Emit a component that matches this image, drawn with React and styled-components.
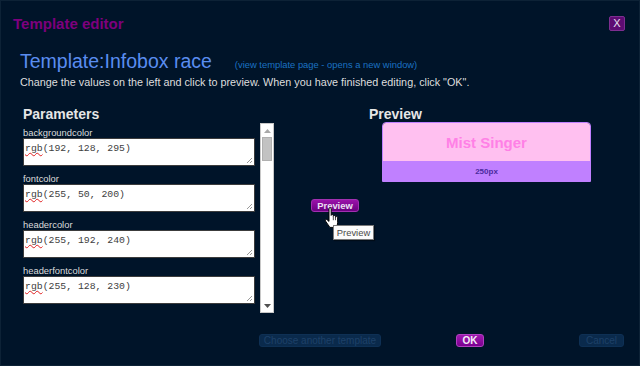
import React from 'react';
import styled, { createGlobalStyle } from 'styled-components';

const GlobalStyle = createGlobalStyle`
  html, body {
    margin: 0;
    padding: 0;
    background: #001429;
  }
  * {
    box-sizing: border-box;
  }
`;

const PARAMS = [
  { name: 'backgroundcolor', value: '(192, 128, 295)' },
  { name: 'fontcolor', value: '(255, 50, 200)' },
  { name: 'headercolor', value: '(255, 192, 240)' },
  { name: 'headerfontcolor', value: '(255, 128, 230)' },
];

const App = () => (
  <>
    <GlobalStyle />
    <Dialog>
      <TitleBar>
        <DialogTitle>Template editor</DialogTitle>
        <CloseButton>X</CloseButton>
      </TitleBar>

      <Content>
        <HeadingRow>
          <TemplateName>Template:Infobox race</TemplateName>
          <TemplateLink>(view template page - opens a new window)</TemplateLink>
        </HeadingRow>
        <Instruction>
          Change the values on the left and click to preview. When you have finished editing, click "OK".
        </Instruction>

        <Columns>
          <LeftColumn>
            <SectionTitle>Parameters</SectionTitle>
            <ScrollPanel>
              <ParamList>
                {PARAMS.map(p => (
                  <ParamItem key={p.name}>
                    <ParamLabel>{p.name}</ParamLabel>
                    <ValueBox>
                      <Misspelled>rgb</Misspelled>
                      {p.value}
                      <Grip width="8" height="8" viewBox="0 0 8 8">
                        <path d="M7 2 L2 7 M7 5 L5 7" stroke="#9a9a9a" strokeWidth="1" />
                      </Grip>
                    </ValueBox>
                  </ParamItem>
                ))}
              </ParamList>
              <ScrollBar>
                <ScrollArrow>
                  <svg width="7" height="4" viewBox="0 0 7 4">
                    <path d="M0 4 L3.5 0 L7 4 Z" fill="#a8a8a8" />
                  </svg>
                </ScrollArrow>
                <ScrollThumb />
                <ScrollTrack />
                <ScrollArrow>
                  <svg width="7" height="4" viewBox="0 0 7 4">
                    <path d="M0 0 L3.5 4 L7 0 Z" fill="#505050" />
                  </svg>
                </ScrollArrow>
              </ScrollBar>
            </ScrollPanel>
          </LeftColumn>

          <MiddleColumn>
            <PreviewButton>Preview</PreviewButton>
            <HandCursor width="16" height="21" viewBox="0 0 13 17.5">
              <path
                d="M4 1.4 C4 0.3 5.8 0.3 5.8 1.4 V7 C5.8 6 7.6 6 7.6 7 V7.8 C7.6 6.9 9.4 6.9 9.4 7.8 V8.6 C9.4 7.8 11.2 7.8 11.2 8.7 V13 C11.2 14.8 10.4 16 10 17 H4.8 C4 15.8 2.6 14 1.2 11.8 C0.6 10.8 1.4 9.8 2.4 10.6 L4 12 Z"
                fill="#ffffff"
                stroke="#000000"
                strokeWidth="0.8"
                strokeLinejoin="round"
              />
              <path d="M7.6 8 V11 M9.4 8.6 V11" stroke="#000" strokeWidth="0.6" />
            </HandCursor>
            <Tooltip>Preview</Tooltip>
          </MiddleColumn>

          <RightColumn>
            <SectionTitle>Preview</SectionTitle>
            <InfoBox>
              <InfoHeader>Mist Singer</InfoHeader>
              <InfoFooter>250px</InfoFooter>
            </InfoBox>
          </RightColumn>
        </Columns>
      </Content>

      <Footer>
        <DimButton $offset={259} $width={122}>Choose another template</DimButton>
        <PurpleButton $offset={76} $width={28}>OK</PurpleButton>
        <DimButton $offset={96} $width={45}>Cancel</DimButton>
      </Footer>
    </Dialog>
  </>
);

const Dialog = styled.div`
  width: 640px;
  height: 366px;
  display: flex;
  flex-direction: column;
  background: #001429;
  border: 1px solid #0d2236;
  font-family: 'Liberation Sans', Arial, sans-serif;
  overflow: hidden;
`;

const TitleBar = styled.div`
  display: flex;
  justify-content: space-between;
  align-items: center;
  padding: 14px 14px 0 12px;
  height: 31px;
`;

const DialogTitle = styled.div`
  font-size: 15px;
  font-weight: 700;
  color: #7d007d;
  line-height: 17px;
`;

const CloseButton = styled.div`
  width: 16px;
  height: 15px;
  display: flex;
  align-items: center;
  justify-content: center;
  background: #5e0c72;
  border: 1px solid #7d2e90;
  border-radius: 2px;
  color: #e8e0ee;
  font-size: 11px;
  line-height: 1;
`;

const Content = styled.div`
  padding-left: 19px;
`;

const HeadingRow = styled.div`
  display: flex;
  align-items: baseline;
  margin-top: 18px;
`;

const TemplateName = styled.div`
  font-size: 19.5px;
  color: #5a8df0;
  line-height: 22px;
`;

const TemplateLink = styled.div`
  margin-left: 23px;
  font-size: 9.4px;
  color: #1b72c2;
`;

const Instruction = styled.div`
  margin-top: 4px;
  font-size: 10.8px;
  color: #dedede;
  line-height: 13px;
`;

const Columns = styled.div`
  display: flex;
  margin-top: 17px;
`;

const LeftColumn = styled.div`
  width: 254px;
  padding-left: 3px;
`;

const SectionTitle = styled.div`
  font-size: 14px;
  font-weight: 700;
  color: #e6e6e6;
  line-height: 16px;
`;

const ScrollPanel = styled.div`
  display: flex;
  align-items: flex-start;
  margin-top: 1px;
`;

const ParamList = styled.div`
  width: 232px;
  padding-top: 4px;
  display: flex;
  flex-direction: column;
  gap: 7px;
`;

const ParamItem = styled.div`
  display: flex;
  flex-direction: column;
`;

const ParamLabel = styled.div`
  font-size: 9.4px;
  color: #dcdcdc;
  line-height: 11px;
`;

const ValueBox = styled.div`
  position: relative;
  height: 28px;
  background: #ffffff;
  border: 1px solid #3c3c3c;
  padding: 4px 1px;
  font-family: 'Liberation Mono', 'Courier New', monospace;
  font-size: 9.8px;
  line-height: 12px;
  color: #404040;
  white-space: pre;
`;

const Misspelled = styled.span`
  text-decoration: underline wavy #e02020;
  text-decoration-thickness: 1px;
  text-underline-offset: 1px;
  text-decoration-skip-ink: none;
`;

const Grip = styled.svg`
  position: absolute;
  right: 1px;
  bottom: 1px;
`;

const ScrollBar = styled.div`
  width: 14px;
  height: 190px;
  margin-left: 5px;
  display: flex;
  flex-direction: column;
  background: #ffffff;
  border: 1px solid #c8c8c8;
`;

const ScrollArrow = styled.div`
  height: 13px;
  display: flex;
  align-items: center;
  justify-content: center;
  flex-shrink: 0;
`;

const ScrollThumb = styled.div`
  height: 24px;
  margin: 0 1px;
  background: #c2c2c2;
  border: 1px solid #b0b0b0;
`;

const ScrollTrack = styled.div`
  flex: 1;
`;

const MiddleColumn = styled.div`
  position: relative;
  width: 95px;
  padding: 93px 0 0 37px;
`;

const PreviewButton = styled.div`
  width: 48px;
  height: 13px;
  display: flex;
  align-items: center;
  justify-content: center;
  border-radius: 3px;
  background: linear-gradient(#9a12aa, #6a0080);
  border: 1px solid #a030b0;
  color: #ece0f4;
  font-size: 9.4px;
  font-weight: 700;
`;

const HandCursor = styled.svg`
  position: absolute;
  left: 50px;
  top: 101px;
`;

const Tooltip = styled.div`
  position: absolute;
  left: 59px;
  top: 119px;
  width: 41px;
  height: 15px;
  display: flex;
  align-items: center;
  justify-content: center;
  background: #fbfbfb;
  border: 1px solid #7a7a7a;
  box-shadow: 1px 1px 1px rgba(0, 0, 0, 0.4);
  color: #4a4a4a;
  font-size: 9.4px;
`;

const RightColumn = styled.div`
  display: flex;
  flex-direction: column;
`;

const InfoBox = styled.div`
  width: 209px;
  margin: 0 0 0 13px;
  border: 1px solid #c080ff;
  border-radius: 4px 4px 0 0;
  overflow: hidden;
`;

const InfoHeader = styled.div`
  height: 38px;
  display: flex;
  align-items: center;
  justify-content: center;
  background: #ffc0f0;
  color: #ff80e6;
  font-size: 15px;
  font-weight: 700;
`;

const InfoFooter = styled.div`
  height: 20px;
  display: flex;
  align-items: center;
  justify-content: center;
  background: #c080ff;
  color: #4a2a9e;
  font-size: 8px;
  font-weight: 700;
`;

const Footer = styled.div`
  display: flex;
  margin-top: 21px;
`;

const FooterButton = styled.div`
  width: ${p => p.$width}px;
  height: 13px;
  margin-left: ${p => p.$offset - 1}px;
  display: flex;
  align-items: center;
  justify-content: center;
  border-radius: 3px;
  font-size: 10px;
  white-space: nowrap;
`;

const DimButton = styled(FooterButton)`
  background: #0a2a4c;
  border: 1px solid #0e3054;
  color: #1e4168;
`;

const PurpleButton = styled(FooterButton)`
  background: linear-gradient(#a018b0, #7a0090);
  border: 1px solid #b040c0;
  color: #f4ecf8;
  font-weight: 700;
`;

export default App;
